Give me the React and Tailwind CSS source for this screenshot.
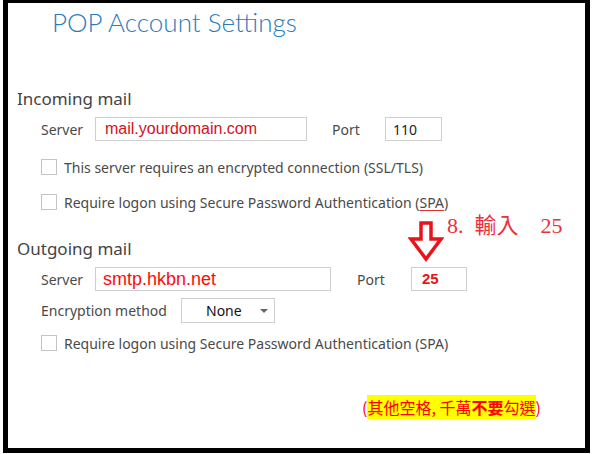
// App.jsx
function Checkbox() {
  return <span className="w-[16px] h-[16px] border border-[#c4c4c4] bg-white shrink-0" />;
}

function App() {
  return (
    <div className="relative w-[595px] h-[454px] bg-white overflow-hidden">
      <div className="ml-[3px] w-[587px] h-[453px] border-black border-t-[3px] border-l-[5px] border-r-[5px] border-b-[5px] font-['Noto_Sans',sans-serif] text-[#4a4a4a]">

        {/* Title */}
        <div className="h-[38px] flex items-center pl-[44px]">
          <h1 className="font-['Lato',sans-serif] font-light text-[26px] leading-none text-[#2b7cbd]">POP Account Settings</h1>
        </div>

        {/* Incoming mail */}
        <div className="mt-[46px] h-[24px] flex items-center pl-[9px] text-[17px] text-[#444]">Incoming mail</div>

        <div className="mt-[6px] h-[24px] flex items-center pl-[33px] text-[14px]">
          <span className="w-[54px]">Server</span>
          <div className="w-[212px] h-[24px] border border-[#cfcfcf] flex items-center pl-[9px] font-['Liberation_Sans',sans-serif] text-[16px] text-[#d4111c]">mail.yourdomain.com</div>
          <span className="ml-[25px] w-[53px]">Port</span>
          <div className="w-[57px] h-[24px] border border-[#cfcfcf] flex items-center pl-[7px] text-[14px] text-[#222]">110</div>
        </div>

        <div className="mt-[14px] h-[24px] flex items-center pl-[33px] gap-[7px] text-[14px]">
          <Checkbox />
          <span>This server requires an encrypted connection (SSL/TLS)</span>
        </div>

        <div className="mt-[11px] h-[24px] flex items-center pl-[33px] gap-[7px] text-[14px]">
          <Checkbox />
          <span>Require logon using Secure Password Authentication (<span className="underline decoration-[#d33] underline-offset-2">SPA</span>)</span>
        </div>

        {/* Outgoing mail */}
        <div className="mt-[23px] h-[24px] flex items-center pl-[9px] text-[17px] text-[#444]">Outgoing mail</div>

        <div className="mt-[6px] h-[24px] flex items-center pl-[33px] text-[14px]">
          <span className="w-[54px]">Server</span>
          <div className="w-[236px] h-[24px] border border-[#cfcfcf] flex items-center pl-[7px] font-['Liberation_Sans',sans-serif] text-[18px] text-[#ff0a0a]">smtp.hkbn.net</div>
          <span className="ml-[26px] w-[54px]">Port</span>
          <div className="w-[56px] h-[24px] border border-[#cfcfcf] flex items-center pl-[10px] font-['Liberation_Sans',sans-serif] font-bold text-[15px] text-[#e8141c]">25</div>
        </div>

        <div className="mt-[7px] h-[25px] flex items-center pl-[33px] text-[14px]">
          <span className="w-[140px]">Encryption method</span>
          <div className="w-[94px] h-[25px] border border-[#cfcfcf] flex items-center text-[14px] text-[#111]">
            <span className="ml-[24px]">None</span>
            <span className="ml-auto mr-[6px] w-0 h-0 border-l-[4px] border-r-[4px] border-t-[4px] border-l-transparent border-r-transparent border-t-[#666]" />
          </div>
        </div>

        <div className="mt-[8px] h-[24px] flex items-center pl-[33px] gap-[7px] text-[14px]">
          <Checkbox />
          <span>Require logon using Secure Password Authentication (SPA)</span>
        </div>

        {/* Note */}
        <div className="mt-[42px] pl-[354px] flex">
          <span className="font-['Noto_Sans_CJK_TC',sans-serif] text-[16px] leading-[20px] text-[#ff0000]">
            (<span className="bg-[#ffff00]">其他空格, 千萬<span className="font-bold text-[#ff0000]">不要</span>勾選</span>)
          </span>
        </div>
      </div>

      {/* Annotation */}
      <div className="absolute left-[447px] top-[211px] font-['Liberation_Serif','Noto_Sans_CJK_TC',serif] text-[22px] leading-[30px] text-[#ec2f3a] whitespace-pre">8.  輸入    25</div>
      <svg className="absolute left-[408px] top-[221px]" width="36" height="41" viewBox="0 0 36 41">
        <path d="M13 2 H23 V18 H33 L18 38 L3 18 H13 Z" fill="white" stroke="#e8141c" strokeWidth="3.5" strokeLinejoin="miter" />
      </svg>
    </div>
  );
}

export default App;
